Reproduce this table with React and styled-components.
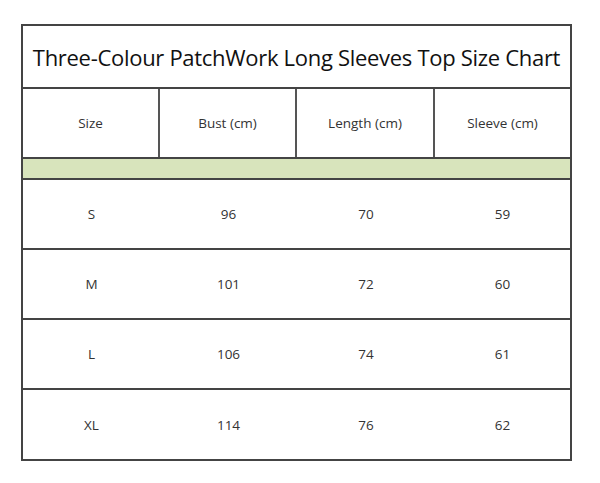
import React from "react";
import styled, { createGlobalStyle } from "styled-components";

const GlobalStyle = createGlobalStyle`
  *, *::before, *::after {
    box-sizing: border-box;
  }
  body {
    margin: 0;
    background: #fff;
    font-family: "Open Sans", "Liberation Sans", sans-serif;
  }
`;

const columns = ["Size", "Bust (cm)", "Length (cm)", "Sleeve (cm)"];

const rows = [
  ["S", "96", "70", "59"],
  ["M", "101", "72", "60"],
  ["L", "106", "74", "61"],
  ["XL", "114", "76", "62"],
];

const Page = styled.div`
  padding: 24px 0 0 21px;
`;

const Chart = styled.div`
  width: 551px;
  border: 2px solid #444;
  display: flex;
  flex-direction: column;
`;

const Title = styled.div`
  height: 63px;
  display: flex;
  align-items: center;
  justify-content: center;
  font-size: 22px;
  letter-spacing: -0.3px;
  color: #111;
  border-bottom: 2px solid #444;
`;

const Row = styled.div`
  display: grid;
  grid-template-columns: 137px 137px 138px 1fr;
  height: ${(p) => (p.$last ? 69 : 70)}px;
  border-bottom: ${(p) => (p.$last ? "none" : "2px solid #444")};
`;

const Cell = styled.div`
  display: flex;
  align-items: center;
  justify-content: center;
  font-size: 13.5px;
  color: #333;
  border-right: ${(p) => (p.$divided ? "2px solid #555" : "none")};
  &:last-child {
    border-right: none;
  }
`;

const Band = styled.div`
  height: 21px;
  background: #d8e4bc;
  border-bottom: 2px solid #444;
`;

export default function App() {
  return (
    <>
      <GlobalStyle />
      <Page>
        <Chart>
          <Title>Three-Colour PatchWork Long Sleeves Top Size Chart</Title>
          <Row>
            {columns.map((c) => (
              <Cell key={c} $divided>
                {c}
              </Cell>
            ))}
          </Row>
          <Band />
          {rows.map((r, i) => (
            <Row key={r[0]} $last={i === rows.length - 1}>
              {r.map((v, j) => (
                <Cell key={j}>{v}</Cell>
              ))}
            </Row>
          ))}
        </Chart>
      </Page>
    </>
  );
}
